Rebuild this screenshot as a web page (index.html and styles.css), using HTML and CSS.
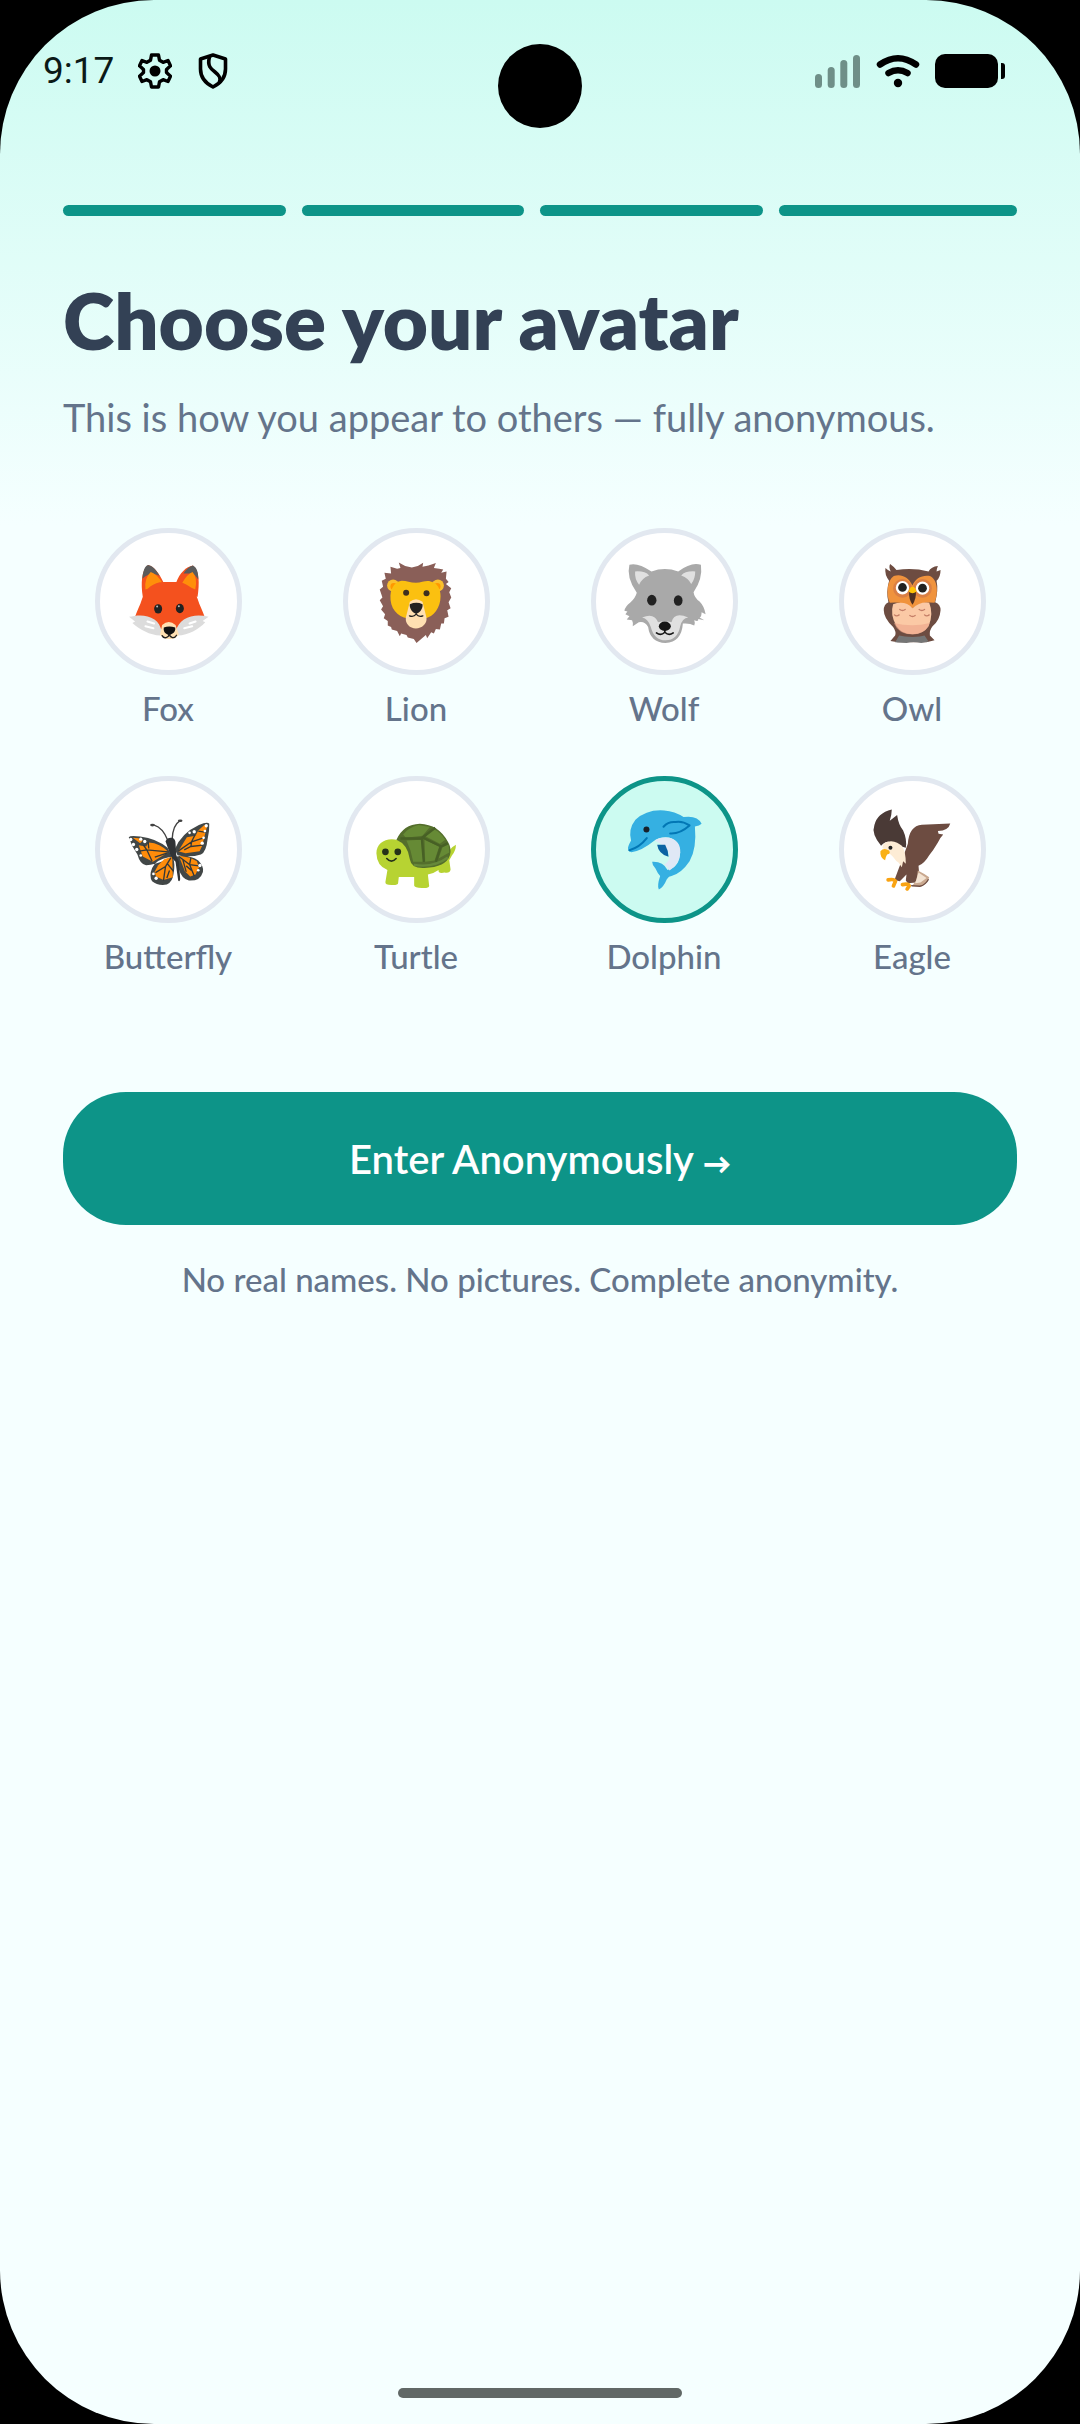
FILE: index.html
```html
<!DOCTYPE html>
<html lang="en">
<head>
<meta charset="utf-8">
<meta name="viewport" content="width=device-width, initial-scale=1">
<title>Choose your avatar</title>
<link rel="stylesheet" href="styles.css">
</head>
<body>
<div class="screen">
  <header class="status">
    <div class="status-side">
      <span class="clock">9:17</span>
      <svg class="icon-gear" viewBox="0 0 34 36" fill="none" stroke="#000" stroke-width="3.4" stroke-linejoin="round" aria-hidden="true">
        <path d="M13.500 2h7l1 5.200 3.600 2.100 4.900-1.800 2.500 5.300-4 3.600v3.200l4 3.600-2.500 5.300-4.900-1.800-3.600 2.100-1 5.200h-7l-1-5.200-3.600-2.100-4.900 1.800-2.500-5.300 4-3.600v-3.200l-4-3.600 2.500-5.300 4.900 1.800 3.600-2.100z"/>
        <circle cx="17" cy="18" r="5.500" fill="#000" stroke="none"/>
      </svg>
      <svg class="icon-shield" viewBox="0 0 30 36" fill="none" stroke="#000" stroke-width="3.600" stroke-linejoin="round" stroke-linecap="round" aria-hidden="true">
        <path d="M15 2 27.500 6v10c0 8-4.500 14-12.500 18C7 30 2.500 24 2.500 16V6z"/>
        <path d="M11.500 4C9 13 13 16 17 19c4.500 3.500 6 6 4.500 10"/>
      </svg>
    </div>
    <div class="status-side">
      <svg class="icon-signal" viewBox="0 0 46 34" fill="#6f8f88" aria-hidden="true">
        <rect x="0" y="20" width="7" height="14" rx="3.500"/><rect x="12.700" y="13" width="7" height="21" rx="3.500"/>
        <rect x="25.300" y="6" width="7" height="28" rx="3.500"/><rect x="38" y="1" width="7" height="33" rx="3.500"/>
      </svg>
      <svg class="icon-wifi" viewBox="0 0 44 34" fill="none" stroke="#000" stroke-width="6.500" stroke-linecap="round" aria-hidden="true">
        <path d="M4 10.500Q22-2 40 10.500M12.500 19Q22 13.500 31.500 19"/><circle cx="22" cy="29" r="4.200" fill="#000" stroke="none"/>
      </svg>
      <svg class="icon-battery" viewBox="0 0 70 34" aria-hidden="true">
        <rect width="63" height="34" rx="10"/><path d="M66 9h1q3 0 3 3v10q0 3-3 3h-1z"/>
      </svg>
    </div>
    <span class="camera"></span>
  </header>

  <main class="content">
    <div class="steps" role="img" aria-label="Step 4 of 4"><span class="step"></span><span class="step"></span><span class="step"></span><span class="step"></span></div>
    <h1 class="title">Choose your avatar</h1>
    <p class="subtitle">This is how you appear to others — fully anonymous.</p>

    <form class="form">
      <div class="avatars" role="radiogroup" aria-label="Avatar">
        <label class="avatar">
          <input class="avatar-input" type="radio" name="avatar" value="fox">
          <span class="avatar-face">
            <svg viewBox="60 69 410 410" aria-hidden="true">
              <path fill="#f4511e" d="M188 260C182 220 184 180 204 165c18 4 34 26 46 52h38c10-28 30-48 50-51 20 14 20 54 14 94z"/>
              <path fill="#5b5b5b" d="M187 206C188 184 194 168 204 165c12 2 24 14 34 32l-18-6q-20 2-33 15zM310 190q12-20 28-24c12 6 17 22 16 42q-10-16-20-18z"/>
              <path fill="#ff8f0a" d="M196 238q-4-34 16-52 18 6 36 34l-26 10zM345 238q8-34-8-52-16 6-32 34l22 10z"/>
              <path fill="#f4511e" d="M164 322c6-18 16-36 22-56 10-30 34-50 64-50h38c28 0 54 18 64 50 6 20 16 38 22 56l-66 36-82 0z"/>
              <path fill="#dcdcdc" d="M147 320c24-6 54-8 76 8 12 8 18 20 22 36l-4 12c-32-2-62-18-84-38l8-4zM385 320c-24-6-52-6-74 8-12 8-20 20-24 34l6 14c32-2 62-18 82-40l-8-4z"/>
              <path fill="#ffe0b2" d="M246 344q20-18 40 0l10 28q-10 16-28 14-20 2-28-14z"/>
              <path stroke="#fff" stroke-width="6" stroke-linecap="round" d="M202 334l20 6M196 348l24 6M328 340l18-6M312 354l24-6"/>
              <ellipse cx="234" cy="296" rx="12" ry="14" fill="#212121"/><ellipse cx="299" cy="295" rx="12" ry="14" fill="#212121"/>
              <circle cx="231" cy="289" r="3" fill="#bbb"/><circle cx="296" cy="288" r="3" fill="#bbb"/>
              <path fill="#111" d="M251 352q16-6 34 0 2 12-8 18l-10 6-10-6q-8-6-6-18z"/>
              <path fill="none" stroke="#222" stroke-width="4" stroke-linecap="round" d="M246 376q4 8 12 6 8-2 9-10 2 8 10 10 8 1 12-7"/>
            </svg>
          </span>
          <span class="avatar-name">Fox</span>
        </label>

        <label class="avatar">
          <input class="avatar-input" type="radio" name="avatar" value="lion">
          <span class="avatar-face">
            <svg viewBox="803 69 410 410" aria-hidden="true">
              <path fill="#8a5f58" d="M1008 398 1000 386 982 382 978 374 962 370 958 378 950 362 934 358 932 350 922 346 922 332 910 324 914 312 902 298 908 288 898 270 906 262 898 238 908 230 904 212 916 206 912 188 932 190 930 170 950 176 960 174 955 157 974 168 994 172 1012 168 1028 158 1026 170 1044 166 1066 159 1060 174 1076 176 1088 178 1082 188 1098 184 1096 206 1104 216 1096 222 1112 234 1106 246 1112 262 1104 276 1110 294 1100 300 1104 320 1092 324 1090 340 1082 340 1078 358 1066 356 1060 370 1052 366 1040 384 1036 374 1022 386z"/>
              <circle cx="938" cy="226" r="18" fill="#fbc02d"/><circle cx="1072" cy="226" r="18" fill="#fbc02d"/>
              <circle cx="940" cy="229" r="10" fill="#ff9800"/><circle cx="1070" cy="229" r="10" fill="#ff9800"/>
              <path fill="#fbc010" d="M930 256C932 230 946 214 964 212 978 212 990 218 1006 218 1024 218 1036 210 1050 214 1070 218 1080 236 1080 258 1080 292 1060 320 1032 324H982C950 320 928 294 930 256z"/>
              <path fill="#ffe0b2" d="M988 275q18-16 38 0l12 48c2 18-14 32-32 32s-32-14-30-32z"/>
              <circle cx="977" cy="248" r="9" fill="#3e2f20"/><circle cx="1038" cy="249" r="9" fill="#3e2f20"/>
              <path fill="#212121" d="M988 282q20-8 38 0c2 12-8 26-19 28-11-2-21-16-19-28z"/>
              <path fill="none" stroke="#212121" stroke-width="4" stroke-linecap="round" d="M1007 300v12q-8 10-20 5M1007 312q8 10 20 5"/>
            </svg>
          </span>
          <span class="avatar-name">Lion</span>
        </label>

        <label class="avatar">
          <input class="avatar-input" type="radio" name="avatar" value="wolf">
          <span class="avatar-face">
            <svg viewBox="106 69 410 410" aria-hidden="true">
              <path fill="#a9a9a9" d="M206 164Q230 156 272 184 312 170 352 184 392 154 420 164 426 206 398 246 400 262 416 274 430 288 434 312L422 306Q422 320 416 322L430 330 412 326Q414 336 400 330 404 340 400 346 386 338 366 340 362 396 314 398 268 396 262 350 252 332 234 336L216 348Q218 338 214 330L198 328 206 318 194 312 200 304 191 302Q194 288 208 278 224 264 228 248 196 202 206 164z"/>
              <path fill="#e0e0e0" d="M223 184q30-2 42 12-22 8-30 28-14-18-12-40zM403 184q-30-2-42 12 22 8 30 26 12-16 12-38z"/>
              <path fill="#e0e0e0" d="M244 322Q280 306 292 336 312 330 332 336 340 304 382 322 364 324 358 348 350 390 314 390 280 390 270 350 262 326 244 322z"/>
              <ellipse cx="273" cy="270" rx="14" ry="16" fill="#212121"/><ellipse cx="352" cy="271" rx="13" ry="16" fill="#212121"/>
              <ellipse cx="312" cy="348" rx="18" ry="14" fill="#151515"/>
              <path fill="none" stroke="#151515" stroke-width="5" stroke-linecap="round" d="M312 356v10q-12 12-25 2M312 366q12 12 25 2"/>
            </svg>
          </span>
          <span class="avatar-name">Wolf</span>
        </label>

        <label class="avatar">
          <input class="avatar-input" type="radio" name="avatar" value="owl">
          <span class="avatar-face">
            <svg viewBox="851 69 410 410" aria-hidden="true">
              <path fill="#6d4c41" d="M975 174Q983 182 991 184 984 172 989 162 998 168 1008 180 1056 172 1104 184 1112 170 1132 168 1128 178 1128 184L1140 180Q1140 202 1128 212 1134 240 1124 276 1140 282 1140 300 1138 330 1116 348 1106 360 1108 376L1122 390 1098 396H1012L990 392 1004 376Q1008 364 998 350 970 324 970 300 970 282 984 276 976 246 986 212 972 194 975 174z"/>
              <path fill="#f0933d" d="M1056 226C1044 200 1020 190 1000 198 980 210 976 254 988 278q36-6 68 16 32-22 66-16c12-28 10-70-14-80-24-4-44 8-52 28z"/>
              <circle cx="1026" cy="235" r="28" fill="#c96f4a" opacity=".55"/><circle cx="1086" cy="235" r="28" fill="#c96f4a" opacity=".55"/>
              <path fill="#fbc9a5" d="M998 282q36-12 58 12 22-20 50-16 14 34-2 70-16 24-48 24t-48-24q-20-36-10-66z"/>
              <path fill="#eca489" d="M1000 338q56 14 108 0-12 34-54 34-40 0-54-34z" opacity=".6"/>
              <g fill="#fff"><circle cx="1026" cy="233" r="20"/><circle cx="1086" cy="234" r="20"/></g>
              <g fill="#212121"><circle cx="1026" cy="232" r="13"/><circle cx="1086" cy="234" r="13"/></g>
              <path fill="#4e2f22" d="M1046 244h20q2 20-10 40-12-18-10-40z"/>
              <path fill="#ffc107" d="M1044 244q4-14 12-14t12 14q-12 10-24 0z"/>
              <path fill="none" stroke="#c47e67" stroke-width="4" stroke-linecap="round" d="M1018 298q8 6 16 0M1076 298q8 6 16 0M1002 314q6 6 14 0M1048 316q8 6 16 0M1092 314q6 6 14 0"/>
              <path fill="#757575" d="M1004 396l12-20q16 4 40 4t36-4l12 18-22 4q-24-6-44 0z"/>
            </svg>
          </span>
          <span class="avatar-name">Owl</span>
        </label>

        <label class="avatar">
          <input class="avatar-input" type="radio" name="avatar" value="butterfly">
          <span class="avatar-face">
            <svg viewBox="60 62 410 410" aria-hidden="true">
              <path fill="none" stroke="#424242" stroke-width="4" stroke-linecap="round" d="M262 238Q248 202 222 194M276 236Q278 194 298 182"/>
              <ellipse cx="217" cy="194" rx="7" ry="4" fill="#424242"/><ellipse cx="300" cy="181" rx="7" ry="4" fill="#424242"/>
              <g transform="translate(120 150)">
                <path fill="#424747" d="M26 80Q30 74 60 78 110 84 142 112L156 140Q150 148 134 150 104 162 78 164 60 162 52 132 34 106 26 80zM164 116Q184 68 236 44 262 32 267 40 268 60 262 86 258 124 242 132 210 142 172 134zM146 140Q108 146 96 172 86 196 96 212 112 226 140 222 158 212 160 190 166 160 158 140zM168 138Q210 132 234 150 252 168 248 184 240 212 206 210 184 204 176 176z"/>
                <g fill="#ff8c0a"><path d="M56 104 78 108 86 96Q120 98 144 124L130 134 98 154 68 138zM38 82 56 83 68 91 60 98z"/><path d="M174 122 200 80 226 76 234 60 252 44 260 50 252 80 246 106 238 122 196 128z"/><path d="M132 146 156 138 158 200 130 208 108 198 103 184 114 164z"/><path d="M176 136 210 142 230 152 236 170 226 192 210 198 194 182z"/></g>
                <path fill="none" stroke="#33383a" stroke-width="4" d="M144 124 80 118 58 122M80 118 96 152M86 114 84 94M80 118 70 104M104 140 140 128M174 122 214 94 250 82M214 94 224 74M192 118 212 108 248 104M212 108 214 94M234 62 258 66M152 142 136 168 130 210M136 168 106 186M142 160 160 182M148 180 140 202M176 138 208 162 236 166M208 162 222 196M188 148 198 184M208 162 212 142M198 166 214 180"/>
              </g>
              <g fill="#fff"><circle cx="152" cy="237" r="5"/><circle cx="160" cy="252" r="5"/><circle cx="170" cy="267" r="5"/><circle cx="182" cy="285" r="4"/><circle cx="182" cy="236" r="5"/><circle cx="194" cy="243" r="5"/><circle cx="378" cy="196" r="5"/><circle cx="374" cy="212" r="4"/><circle cx="370" cy="232" r="4"/><circle cx="366" cy="248" r="5"/><circle cx="342" cy="214" r="5"/><circle cx="328" cy="217" r="4"/><circle cx="220" cy="340" r="4"/><circle cx="228" cy="353" r="5"/><circle cx="359" cy="315" r="5"/><circle cx="354" cy="329" r="4"/></g>
              <path fill="#303336" d="M256 242q6-12 20-10 10 4 10 16l2 34q2 12 8 20l4 54q-2 10-6 4l-8-56q-12-10-16-22z"/>
            </svg>
          </span>
          <span class="avatar-name">Butterfly</span>
        </label>

        <label class="avatar">
          <input class="avatar-input" type="radio" name="avatar" value="turtle">
          <span class="avatar-face">
            <svg viewBox="803 62 410 410" aria-hidden="true">
              <path fill="#b7d332" d="M888 278c0-26 20-42 46-42 24 0 40 10 50 30l20 46q50 6 96-36l8-8q8-10 18-15 0 18-12 32l-8 14 4 28q-2 12-18 9-20 4-18-8-14 10-32 14l4 34q-2 8-22 6-22 0-23-7v-26l-46 0-2 18q0 7-20 6-20 0-18-9l6-36q-32-12-33-50z"/>
              <path fill="#546e2c" d="M948 238q20-46 70-48 56 2 84 54 12 20 6 40-12 36-76 38-40 2-44-26-6-44-40-58z"/>
              <path fill="#668a35" d="M968 222q16-20 46-28l34 6-22 26-50 6zM1056 204q26 12 38 34l-16 12-42-22zM1022 238l6 66-30 0-8-34-12-30zM1032 238l44 20-14 42-28 4zM1104 252l2 24-32 18 12-34z"/>
              <path fill="none" stroke="#476025" stroke-width="7" d="M960 234l62 0 42-32M1024 234l6 70M1028 232l54 26 20-10M1080 260l-14 44"/>
              <path fill="none" stroke="#66883a" stroke-width="7" d="M1000 313q58 10 102-22"/>
              <circle cx="915" cy="274" r="10" fill="#263219"/><circle cx="952" cy="274" r="10" fill="#263219"/>
              <path fill="none" stroke="#263219" stroke-width="5" stroke-linecap="round" d="M919 294q14 16 28 0"/>
            </svg>
          </span>
          <span class="avatar-name">Turtle</span>
        </label>

        <label class="avatar">
          <input class="avatar-input" type="radio" name="avatar" value="dolphin" checked>
          <span class="avatar-face">
            <svg viewBox="106 62 410 410" aria-hidden="true">
              <path fill="#35b0e2" d="M202 265Q200 260 211 240 202 206 224 178 258 146 310 150 342 152 368 170 410 164 422 190 416 196 402 198 408 264 386 302 362 338 332 346 324 346 318 356 308 380 294 387 288 376 298 346 290 338 284 324 274 314 274 304 306 302 320 328 356 320 358 276 354 230 314 230 292 230 278 242 244 270 212 275 202 274 202 265z"/>
              <path fill="#e0e8f6" d="M282 240q18-12 44-8 34 10 32 44-2 36-32 54-6-12-16-18 16-8 16-26-4-26-44-46z"/>
              <path fill="#0a62a3" d="M289 253h24q10 18 10 36-30-8-34-36z"/>
              <path fill="none" stroke="#0277b5" stroke-width="6" stroke-linecap="round" stroke-linejoin="round" d="M206 269q30-8 52-36M308 199q14-16 36-14 20-4 42 10-30 26-58 24"/>
              <circle cx="257" cy="207" r="9" fill="#17202a"/>
            </svg>
          </span>
          <span class="avatar-name">Dolphin</span>
        </label>

        <label class="avatar">
          <input class="avatar-input" type="radio" name="avatar" value="eagle">
          <span class="avatar-face">
            <svg viewBox="851 62 410 410" aria-hidden="true">
              <path fill="#6d4c41" d="M1042 250Q1046 196 1084 193L1169 189Q1164 210 1132 212L1134 220 1148 222Q1138 232 1132 246 1118 270 1106 284 1092 308 1074 316L1076 340 1066 366 1042 368 1036 360 1038 342 1018 362 1002 358 1014 326 1024 300z"/>
              <path fill="#4a3a36" d="M962 256q-30-36-20-62 8-36 52-47 0 14-6 34l22-17q4 30 18 46 12 26 8 52l-34-10q-18-16-34-2z"/>
              <path fill="#fdecd5" d="M966 262q0-20 26-20 20 2 32 14 12 16 12 54l-8-8-4 18-10-14q-8-4-14-14-10-12-34-30z"/>
              <path fill="#f9b016" d="M960 272q10-12 26-2 6 10-6 12-4 6-6 17-16-8-14-27z"/>
              <circle cx="990" cy="262" r="6" fill="#222"/>
              <path fill="#c9a88f" d="M1072 330q20 10 34 20-6 20-24 28h-28l14-20z"/><path fill="#f3e3d2" d="M1074 336l24 16-18 14-16 2z"/>
              <path fill="none" stroke="#6d4c41" stroke-width="4" d="M1104 356q-10 18-26 21l-26-2"/>
              <path fill="none" stroke="#f9a312" stroke-width="11" stroke-linecap="round" stroke-linejoin="round" d="M983 358q18-4 22 4l-6 14M1026 372q18-4 20 4l-6 9"/>
            </svg>
          </span>
          <span class="avatar-name">Eagle</span>
        </label>
      </div>
      <button class="submit" type="submit">Enter Anonymously <span class="arrow">→</span></button>
      <p class="note">No real names. No pictures. Complete anonymity.</p>
    </form>
  </main>
  <footer class="home"><span class="home-bar"></span></footer>
</div>
</body>
</html>
```
FILE: styles.css
```css
* { box-sizing: border-box; }

body {
  margin: 0;
  background: #000;
  font-family: Lato, "Noto Sans", sans-serif;
  color: #64748b;
}

.screen {
  display: flex;
  flex-direction: column;
  min-height: 100vh;
  border-radius: 154px;
  background: linear-gradient(#ccfbf1 0, #f5ffff 525px);
}

.status {
  position: relative;
  display: flex;
  justify-content: space-between;
  padding: 48px 75px 0 43px;
  height: 142px;
}

.status-side {
  display: flex;
  align-items: center;
  height: 46px;
}

.clock {
  font: 400 37px/46px Roboto, sans-serif;
  color: #0b1a17;
}

.icon-gear { width: 34px; height: 36px; margin-left: 24px; }
.icon-shield { width: 30px; height: 36px; margin-left: 26px; }
.icon-signal { width: 46px; height: 34px; }
.icon-wifi { width: 44px; height: 34px; margin: 0 15px; }
.icon-battery { width: 70px; height: 34px; }

.camera {
  position: absolute;
  top: 44px;
  left: 50%;
  width: 84px;
  height: 84px;
  margin-left: -42px;
  border-radius: 50%;
  background: #000;
}

.content {
  flex: 1;
  padding: 63px 63px 0;
}

.steps {
  display: grid;
  grid-template-columns: repeat(4, 1fr);
}

.step {
  height: 11px;
  margin-right: 16px;
  border-radius: 6px;
  background: #0d9488;
}

.step:last-child { margin-right: 0; }

.title {
  margin: 58px 0 0;
  font-size: 78px;
  line-height: 92px;
  font-weight: 800;
  color: #334155;
}

.subtitle {
  margin: 26px 0 0;
  font-size: 38px;
  line-height: 50px;
}

.avatars {
  display: grid;
  grid-template-columns: repeat(4, 1fr);
  gap: 43px 38px;
  margin-top: 86px;
}

.avatar {
  position: relative;
  display: flex;
  flex-direction: column;
  align-items: center;
  gap: 8px;
}

.avatar-input {
  position: absolute;
  opacity: 0;
}

.avatar-face {
  width: 147px;
  height: 147px;
  border: 5px solid #e2e8f0;
  border-radius: 50%;
  background: #fff;
}

.avatar-face svg { display: block; width: 100%; }

.avatar-input:checked + .avatar-face {
  border-color: #0d9488;
  background: #ccfbf1;
}

.avatar-name {
  font-size: 33px;
  line-height: 50px;
  font-weight: 500;
}

.submit {
  display: block;
  width: 100%;
  height: 133px;
  margin-top: 111px;
  border: 0;
  border-radius: 63px;
  background: #0d9488;
  color: #fff;
  font-family: inherit;
  font-size: 40px;
  font-weight: 600;
}

.arrow {
  font-size: 28px;
  font-weight: 800;
}

.note {
  margin: 29px 0 0;
  font-size: 33px;
  line-height: 50px;
  font-weight: 500;
  text-align: center;
}

.home {
  display: flex;
  justify-content: center;
  padding-bottom: 26px;
}

.home-bar {
  width: 284px;
  height: 10px;
  border-radius: 5px;
  background: #616866;
}
```
